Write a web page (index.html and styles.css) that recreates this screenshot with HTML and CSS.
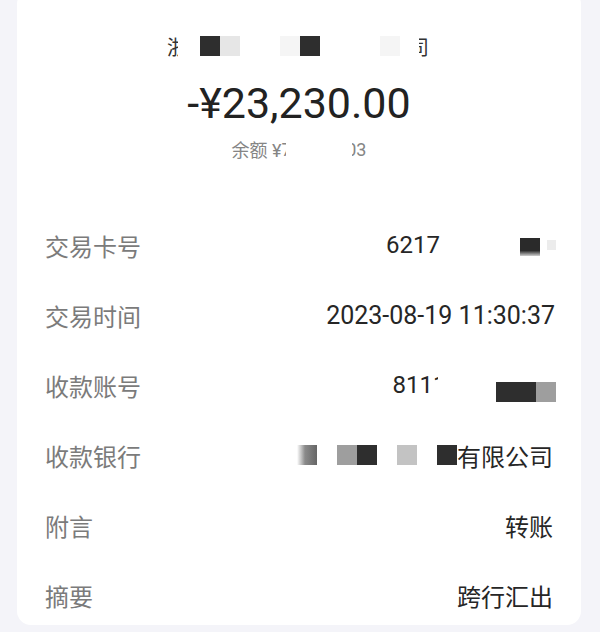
FILE: index.html
```html
<!DOCTYPE html>
<html lang="zh-CN">
<head>
    <meta charset="UTF-8">
    <meta name="viewport" content="width=device-width, initial-scale=1.0">
    <title>交易详情</title>
    <link rel="stylesheet" href="styles.css">
</head>
<body>
    <div class="detail-card">
        <div class="summary">
            <div class="merchant">
                <span class="clip clip-left">浙</span>
                <span class="gap g22"></span>
                <span class="px dark"></span>
                <span class="px light"></span>
                <span class="gap g40"></span>
                <span class="px faint"></span>
                <span class="px dark"></span>
                <span class="gap g60"></span>
                <span class="px faint"></span>
                <span class="gap g19"></span>
                <span class="clip clip-right">司</span>
            </div>
            <div class="amount">-¥23,230.00</div>
            <div class="balance">
                <span>余额 ¥</span>
                <span class="clip clip-digit">7</span>
                <span class="gap g66"></span>
                <span class="clip clip-tail">03</span>
            </div>
        </div>

        <div class="info-list">
            <div class="info-row">
                <span class="info-label">交易卡号</span>
                <span class="info-value push-right">
                    <span>6217</span>
                    <span class="gap g80"></span>
                    <span class="px dark blur-bottom"></span>
                    <span class="gap g7"></span>
                    <span class="px tiny"></span>
                </span>
            </div>
            <div class="info-row">
                <span class="info-label">交易时间</span>
                <span class="info-value digits">2023-08-19 11:30:37</span>
            </div>
            <div class="info-row">
                <span class="info-label">收款账号</span>
                <span class="info-value push-right">
                    <span>811</span>
                    <span class="clip clip-digit">1</span>
                    <span class="gap g58"></span>
                    <span class="px dark wide low"></span>
                    <span class="px grey low"></span>
                </span>
            </div>
            <div class="info-row">
                <span class="info-label">收款银行</span>
                <span class="info-value">
                    <span class="px fade"></span>
                    <span class="gap g20"></span>
                    <span class="px grey"></span>
                    <span class="px dark"></span>
                    <span class="gap g20"></span>
                    <span class="px silver"></span>
                    <span class="gap g20"></span>
                    <span class="px dark"></span>
                    <span>有限公司</span>
                </span>
            </div>
            <div class="info-row">
                <span class="info-label">附言</span>
                <span class="info-value">转账</span>
            </div>
            <div class="info-row">
                <span class="info-label">摘要</span>
                <span class="info-value">跨行汇出</span>
            </div>
        </div>
    </div>
</body>
</html>
```

FILE: styles.css
```css
body {
    margin: 0;
    height: 632px;
    padding: 0 19px 0 17px;
    background-color: #f4f4f9;
    font-family: Roboto, "Noto Sans CJK SC", sans-serif;
    overflow: hidden;
}
.detail-card {
    margin-top: -10px;
    height: 635px;
    background-color: #ffffff;
    border-radius: 14px;
    overflow: hidden;
}
.summary {
    padding-top: 44px;
    text-align: center;
}
.merchant {
    display: flex;
    justify-content: center;
    align-items: center;
    height: 24px;
    font-size: 20px;
    color: #333;
    margin-left: -2px;
}
.amount {
    margin-top: 21px;
    font-size: 43px;
    line-height: 48px;
    color: #222;
}
.balance {
    display: flex;
    justify-content: center;
    align-items: center;
    margin-top: 10px;
    height: 24px;
    font-size: 18px;
    color: #858585;
}
.clip {
    display: inline-block;
    overflow: hidden;
    white-space: nowrap;
}
.clip-left {
    width: 11px;
}
.clip-right {
    width: 10px;
    direction: rtl;
}
.clip-digit {
    width: 5px;
}
.clip-tail {
    width: 14px;
    direction: rtl;
}
.gap {
    display: inline-block;
}
.g7 { width: 7px; }
.g19 { width: 19px; }
.g20 { width: 20px; }
.g22 { width: 22px; }
.g40 { width: 40px; }
.g58 { width: 58px; }
.g60 { width: 60px; }
.g66 { width: 66px; }
.g80 { width: 80px; }
.px {
    display: inline-block;
    width: 20px;
    height: 20px;
}
.px.dark { background-color: #2e2e2e; }
.px.light { background-color: #e6e6e6; }
.px.faint { background-color: #f5f5f5; }
.px.grey { background-color: #9e9e9e; }
.px.silver { background-color: #c3c3c3; }
.px.fade { background: linear-gradient(to right, #ffffff, #8a8a8a 40%, #666666); }
.px.tiny {
    width: 9px;
    height: 10px;
    background-color: #ececec;
}
.px.wide { width: 40px; }
.px.low { margin-top: 14px; }
.px.blur-bottom {
    height: 18px;
    background: linear-gradient(to bottom, #2a2a2a 70%, #d0d0d0);
    margin-top: 4px;
}
.info-list {
    margin-top: 49px;
}
.info-row {
    display: flex;
    justify-content: space-between;
    align-items: center;
    height: 70px;
    padding: 0 28px 0 28px;
    font-size: 24px;
}
.info-label {
    color: #7b7b7b;
}
.info-value {
    display: flex;
    align-items: center;
    color: #262626;
}
.info-value.digits {
    font-size: 25px;
    margin-right: -2px;
}
.info-value.push-right {
    margin-right: -3px;
}
```
